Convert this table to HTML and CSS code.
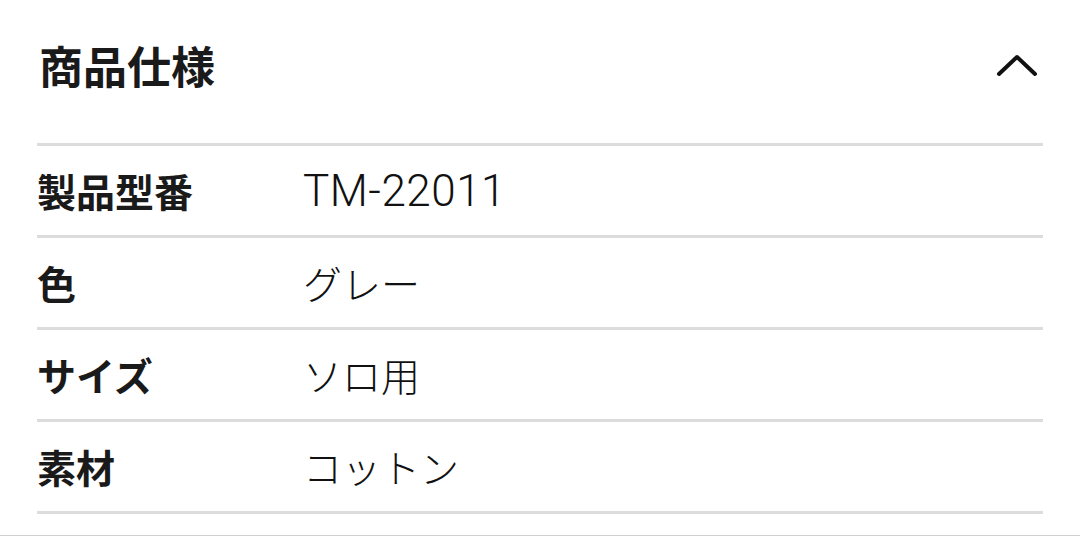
FILE: index.html
```html
<!DOCTYPE html>
<html lang="ja">
<head>
    <meta charset="UTF-8">
    <meta name="viewport" content="width=device-width, initial-scale=1.0">
    <title>商品仕様</title>
    <link rel="stylesheet" href="styles.css">
</head>
<body>

    <section class="spec-section">
        <div class="spec-header">
            <h2>商品仕様</h2>
            <button class="toggle-btn" type="button" aria-label="閉じる">
                <svg width="44" height="28" viewBox="0 0 44 28">
                    <polyline points="4,23 22,6 40,23" fill="none" stroke="#111" stroke-width="4" stroke-linecap="round" stroke-linejoin="round"/>
                </svg>
            </button>
        </div>

        <dl class="spec-list">
            <div class="spec-row">
                <dt>製品型番</dt>
                <dd class="code">TM-22011</dd>
            </div>
            <div class="spec-row">
                <dt>色</dt>
                <dd>グレー</dd>
            </div>
            <div class="spec-row">
                <dt>サイズ</dt>
                <dd>ソロ用</dd>
            </div>
            <div class="spec-row">
                <dt>素材</dt>
                <dd>コットン</dd>
            </div>
        </dl>
    </section>

    <div class="next-section"></div>

</body>
</html>
```

FILE: styles.css
```css
/* Page */
body {
    font-family: "Noto Sans CJK JP", "Noto Sans", sans-serif;
    margin: 0;
    padding: 0;
    background: #fff;
    color: #1a1a1a;
}

/* Section */
.spec-section {
    margin: 0 37px;
}

/* Header */
.spec-header {
    height: 130px;
    margin-bottom: 13px;
    display: flex;
    align-items: center;
    justify-content: space-between;
}

.spec-header h2 {
    margin: 0 0 0 2px;
    font-size: 44px;
    font-weight: 700;
    line-height: 1;
}

.toggle-btn {
    background: none;
    border: none;
    padding: 0;
    margin-right: 4px;
    display: flex;
    cursor: pointer;
}

/* Spec list */
.spec-list {
    margin: 0;
    border-top: 3px solid #dcdcdc;
}

.spec-row {
    height: 89px;
    display: flex;
    align-items: center;
    border-bottom: 3px solid #dcdcdc;
}

.spec-row dt {
    width: 266px;
    font-size: 39px;
    font-weight: 700;
    line-height: 1;
}

.spec-row dd {
    margin: 0;
    font-size: 39px;
    font-weight: 300;
    line-height: 1;
    color: #111;
}

/* Product code uses the wider latin face */
.spec-row dd.code {
    font-family: Roboto, "Noto Sans CJK JP", sans-serif;
    font-size: 44px;
    font-weight: 300;
    letter-spacing: 0.5px;
}

/* Next section edge */
.next-section {
    margin-top: 21px;
    border-top: 2px solid #d0d0d0;
}
```
